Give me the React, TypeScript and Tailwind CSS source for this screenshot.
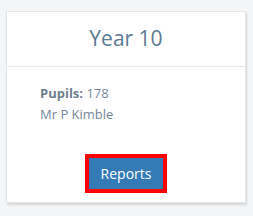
export default function App() {
  return (
    <div className="min-h-screen bg-[#f4f5f7] pt-[11px] pl-[6px]" style={{ fontFamily: '"Open Sans", sans-serif' }}>
      <div className="w-[240px] h-[192px] bg-white border border-[#e4e6e8] shadow-[1px_2px_2px_rgba(0,0,0,0.12)] flex flex-col">
        {/* Header */}
        <div className="h-[55px] border-b border-[#e6e8ea] flex items-center justify-center">
          <h3 className="text-[21px] leading-none text-[#5b7a94] pb-[1px]">Year 10</h3>
        </div>

        {/* Body */}
        <div className="pl-[33px] pt-[16px] text-[13px] leading-[21px] text-[#74879a]">
          <p>
            <span className="font-bold text-[#6f7f8f]">Pupils:</span> 178
          </p>
          <p>Mr P Kimble</p>
        </div>

        {/* Footer */}
        <div className="mt-auto flex justify-center pb-[9px]">
          <button className="border-[4px] border-[#ff0000] bg-[#337ab7] text-white text-[14px] leading-none h-[39px] px-[12px]">
            Reports
          </button>
        </div>
      </div>
    </div>
  );
}
